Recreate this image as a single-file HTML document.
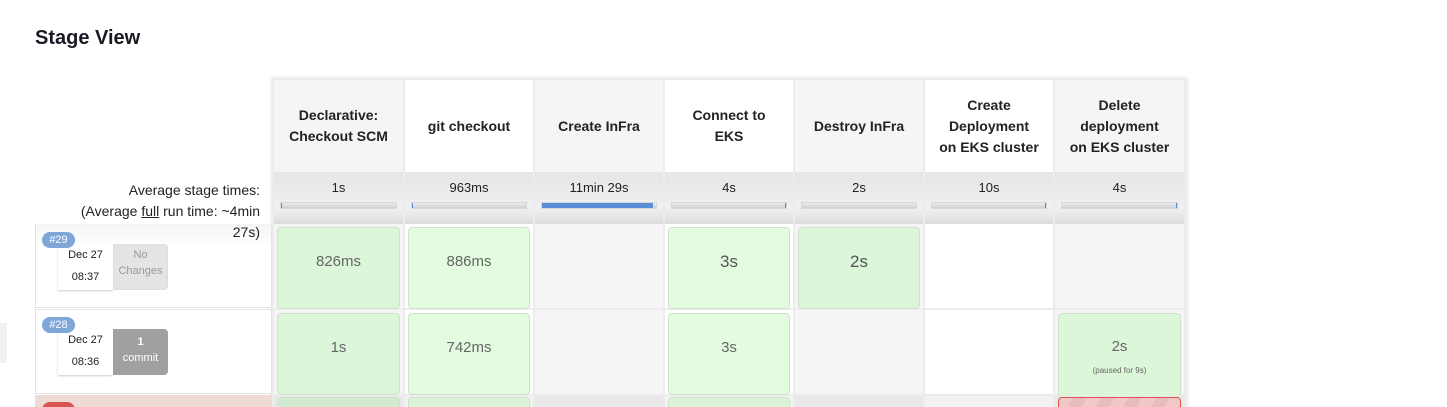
<!DOCTYPE html>
<html><head><meta charset="utf-8"><style>
html,body{margin:0;width:1447px;height:407px;overflow:hidden}
body{background:#fff;font-family:"Liberation Sans","DejaVu Sans",sans-serif;position:relative;color:#222}
.a{position:absolute;box-sizing:border-box}
h1{position:absolute;left:35px;top:27px;margin:0;font-size:20px;font-weight:bold;color:#1a1a24}
.hd{font-weight:bold;font-size:14px;text-align:center;display:flex;align-items:center;justify-content:center;line-height:21px;color:#222}
.avg{background:linear-gradient(#e6e6e6,#f0f0f0 70%,#dcdcdc);text-align:center;font-size:13px;padding-top:8px}
.bar{position:absolute;left:6px;right:6px;top:30px;height:5px;background:linear-gradient(#ececec,#d0d0d0);border:1px solid #d8d8d8}
.bar i{position:absolute;left:0;top:0;bottom:0;background:#5b8dd6}
.box{position:absolute;left:3px;right:3px;border:1px solid #cfe3cc;border-radius:4px;text-align:center;color:#666;font-size:15px}
</style></head><body>
<h1>Stage View</h1>
<div class="a" style="left:272px;top:78px;width:915px;height:329px;box-shadow:0 0 4px rgba(0,0,0,.15);background:#ececec"></div>
<div class="a hd" style="left:274px;top:80px;width:129px;height:92px;background:#f5f5f5">Declarative:<br>Checkout SCM</div>
<div class="a hd" style="left:405px;top:80px;width:128px;height:92px;background:#fff">git checkout</div>
<div class="a hd" style="left:535px;top:80px;width:128px;height:92px;background:#f5f5f5">Create InFra</div>
<div class="a hd" style="left:665px;top:80px;width:128px;height:92px;background:#fff">Connect to<br>EKS</div>
<div class="a hd" style="left:795px;top:80px;width:128px;height:92px;background:#f5f5f5">Destroy InFra</div>
<div class="a hd" style="left:925px;top:80px;width:128px;height:92px;background:#fff">Create<br>Deployment<br>on EKS cluster</div>
<div class="a hd" style="left:1055px;top:80px;width:129px;height:92px;background:#f5f5f5">Delete<br>deployment<br>on EKS cluster</div>
<div class="a avg" style="left:274px;top:172px;width:129px;height:52px">1s<div class="bar"><i style="width:1px"></i></div></div>
<div class="a avg" style="left:405px;top:172px;width:128px;height:52px">963ms<div class="bar"><i style="width:1px"></i></div></div>
<div class="a avg" style="left:535px;top:172px;width:128px;height:52px">11min 29s<div class="bar"><i style="width:97%"></i></div></div>
<div class="a avg" style="left:665px;top:172px;width:128px;height:52px">4s<div class="bar"><i style="left:auto;right:0;width:1px"></i></div></div>
<div class="a avg" style="left:795px;top:172px;width:128px;height:52px">2s<div class="bar"><i style="width:0"></i></div></div>
<div class="a avg" style="left:925px;top:172px;width:128px;height:52px">10s<div class="bar"><i style="left:auto;right:0;width:1px"></i></div></div>
<div class="a avg" style="left:1055px;top:172px;width:129px;height:52px">4s<div class="bar"><i style="left:auto;right:0;width:1px"></i></div></div>
<div class="a" style="left:0;top:323px;width:7px;height:40px;background:#f0f0f5"></div>
<div class="a" style="left:35px;top:224px;width:237px;height:84px;border:1px solid #e4e4e4;border-top:none;background:linear-gradient(#f4f4f4,#fff 22px,#fff 22px)"></div>
<div class="a" style="left:35px;top:309px;width:237px;height:85px;border:1px solid #e4e4e4;background:#fff"></div>
<div class="a" style="left:35px;top:395px;width:237px;height:12px;background:#efdbd6"></div>
<div class="a" style="left:40px;top:180px;width:220px;text-align:right;font-size:14px;line-height:21px;color:#222;z-index:3;white-space:nowrap">Average stage times:<br>(Average <u>full</u> run time: ~4min<br>27s)</div>
<div class="a" style="left:42px;top:232px;width:33px;height:16px;border-radius:8px;background:#7ea7d8;color:#fff;font-size:11px;text-align:center;line-height:16px;z-index:4">#29</div>
<div class="a" style="left:58px;top:244px;width:55px;height:46px;background:#fff;box-shadow:0 1px 2px rgba(0,0,0,.2);font-size:11px;text-align:center;line-height:22px">Dec 27<br>08:37</div>
<div class="a" style="left:113px;top:244px;width:55px;height:46px;background:#e4e4e4;border:1px solid #ddd;border-radius:0 4px 4px 0;font-size:11px;text-align:center;line-height:16px;color:#999;padding-top:2px">No<br>Changes</div>
<div class="a" style="left:42px;top:317px;width:33px;height:16px;border-radius:8px;background:#7ea7d8;color:#fff;font-size:11px;text-align:center;line-height:16px;z-index:4">#28</div>
<div class="a" style="left:58px;top:329px;width:55px;height:46px;background:#fff;box-shadow:0 1px 2px rgba(0,0,0,.2);font-size:11px;text-align:center;line-height:22px">Dec 27<br>08:36</div>
<div class="a" style="left:113px;top:329px;width:55px;height:46px;background:#a0a0a0;border-radius:0 4px 4px 0;font-size:11px;text-align:center;line-height:16px;color:#fff;padding-top:5px"><b>1</b><br>commit</div>
<div class="a" style="left:42px;top:402px;width:33px;height:16px;border-radius:8px;background:#d9534f"></div>
<div class="a" style="left:274px;top:224px;width:129px;height:84px;background:#f5f5f5"><div class="box" style="top:3px;height:80px;background:#dcf6da;line-height:68px">826ms</div></div>
<div class="a" style="left:405px;top:224px;width:128px;height:84px;background:#fff"><div class="box" style="top:3px;height:80px;background:#e3fce0;line-height:68px">886ms</div></div>
<div class="a" style="left:535px;top:224px;width:128px;height:84px;background:#f5f5f5"></div>
<div class="a" style="left:665px;top:224px;width:128px;height:84px;background:#fff"><div class="box" style="top:3px;height:80px;background:#e3fce0;line-height:68px;font-size:17px;color:#555">3s</div></div>
<div class="a" style="left:795px;top:224px;width:128px;height:84px;background:#f5f5f5"><div class="box" style="top:3px;height:80px;background:#dcf6da;line-height:68px;font-size:17px;color:#555">2s</div></div>
<div class="a" style="left:925px;top:224px;width:128px;height:84px;background:#fff"></div>
<div class="a" style="left:1055px;top:224px;width:129px;height:84px;background:#f5f5f5"></div>
<div class="a" style="left:274px;top:310px;width:129px;height:84px;background:#f5f5f5"><div class="box" style="top:3px;height:80px;background:#dcf6da;line-height:68px">1s</div></div>
<div class="a" style="left:405px;top:310px;width:128px;height:84px;background:#fff"><div class="box" style="top:3px;height:80px;background:#e3fce0;line-height:68px">742ms</div></div>
<div class="a" style="left:535px;top:310px;width:128px;height:84px;background:#f5f5f5"></div>
<div class="a" style="left:665px;top:310px;width:128px;height:84px;background:#fff"><div class="box" style="top:3px;height:80px;background:#e3fce0;line-height:68px">3s</div></div>
<div class="a" style="left:795px;top:310px;width:128px;height:84px;background:#f5f5f5"></div>
<div class="a" style="left:925px;top:310px;width:128px;height:84px;background:#fff"></div>
<div class="a" style="left:1055px;top:310px;width:129px;height:84px;background:#f5f5f5"><div class="box" style="top:3px;height:80px;background:#dcf6da;padding-top:24px;line-height:18px">2s<div style="font-size:8px;margin-top:6px">(paused for 9s)</div></div></div>
<div class="a" style="left:274px;top:396px;width:129px;height:11px;background:#e8e8e8;overflow:hidden"><div class="box" style="top:1px;height:20px;background:#d2ebd0"></div></div>
<div class="a" style="left:405px;top:396px;width:128px;height:11px;background:#f2f2f2;overflow:hidden"><div class="box" style="top:1px;height:20px;background:#dbf4d8"></div></div>
<div class="a" style="left:535px;top:396px;width:128px;height:11px;background:#e8e8e8"></div>
<div class="a" style="left:665px;top:396px;width:128px;height:11px;background:#f2f2f2;overflow:hidden"><div class="box" style="top:1px;height:20px;background:#dbf4d8"></div></div>
<div class="a" style="left:795px;top:396px;width:128px;height:11px;background:#e8e8e8"></div>
<div class="a" style="left:925px;top:396px;width:128px;height:11px;background:#f2f2f2"></div>
<div class="a" style="left:1055px;top:396px;width:129px;height:11px;background:#e8e8e8;overflow:hidden"><div class="box" style="top:1px;height:20px;background:repeating-linear-gradient(120deg,#f0c8c8 0 12px,#e8bcbc 12px 24px);border-color:#d9534f"></div></div>
</body></html>
